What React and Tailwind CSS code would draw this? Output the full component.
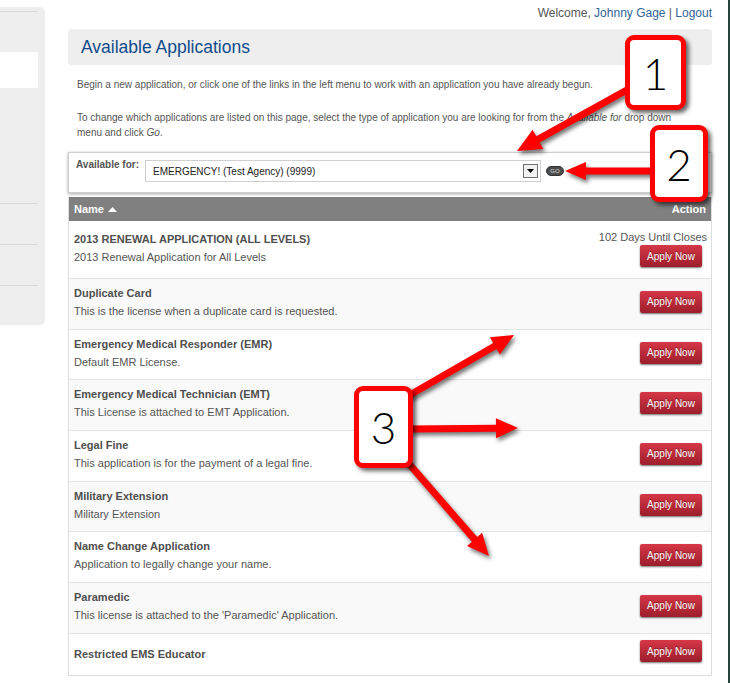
import React from "react";

function arrowPoints(x1, y1, x2, y2, w = 7, L = 22, H = 20) {
  const dx = x2 - x1, dy = y2 - y1;
  const len = Math.hypot(dx, dy);
  const ux = dx / len, uy = dy / len;
  const px = -uy, py = ux;
  const bx = x2 - ux * L, by = y2 - uy * L;
  const pts = [
    [x1 + (px * w) / 2, y1 + (py * w) / 2],
    [bx + (px * w) / 2, by + (py * w) / 2],
    [bx + (px * H) / 2, by + (py * H) / 2],
    [x2, y2],
    [bx - (px * H) / 2, by - (py * H) / 2],
    [bx - (px * w) / 2, by - (py * w) / 2],
    [x1 - (px * w) / 2, y1 - (py * w) / 2],
  ];
  return pts.map((p) => p.map((n) => n.toFixed(1)).join(",")).join(" ");
}

const arrows = [
  [634, 86, 517, 151, 7, 24, 22],
  [656, 171, 565, 171, 7, 21, 18],
  [408, 396, 514, 335, 7, 22, 20],
  [410, 429, 518, 428, 7, 22, 20],
  [404, 458, 489, 556, 7, 22, 20],
];

const rows = [
  {
    t: "2013 RENEWAL APPLICATION (ALL LEVELS)",
    d: "2013 Renewal Application for All Levels",
    days: "102 Days Until Closes",
    cls: "h-[58px] bg-white border-[#e4e4e4] pb-[3px]",
  },
  { t: "Duplicate Card", d: "This is the license when a duplicate card is requested.", cls: "h-[50.7px] bg-[#f9f9f9] border-[#e4e4e4] pb-[4px]" },
  { t: "Emergency Medical Responder (EMR)", d: "Default EMR License.", cls: "h-[50.7px] bg-white border-[#e4e4e4] pb-[4px]" },
  { t: "Emergency Medical Technician (EMT)", d: "This License is attached to EMT Application.", cls: "h-[50.7px] bg-[#f9f9f9] border-[#e4e4e4] pb-[4px]" },
  { t: "Legal Fine", d: "This application is for the payment of a legal fine.", cls: "h-[50.7px] bg-white border-[#e4e4e4] pb-[4px]" },
  { t: "Military Extension", d: "Military Extension", cls: "h-[50.7px] bg-[#f9f9f9] border-[#e4e4e4] pb-[4px]" },
  { t: "Name Change Application", d: "Application to legally change your name.", cls: "h-[50.7px] bg-white border-[#e4e4e4] pb-[4px]" },
  { t: "Paramedic", d: "This license is attached to the 'Paramedic' Application.", cls: "h-[50.7px] bg-[#f9f9f9] border-[#e4e4e4] pb-[4px]" },
  { t: "Restricted EMS Educator", cls: "h-[42px] bg-white border-[#dddddd] pb-0", last: true },
];

function ApplyButton({ up }) {
  return (
    <div className={"h-[22px] w-[62px] rounded-[2px] bg-linear-to-b from-[#d63746] to-[#9d1e2c] text-white text-[10px] flex items-center justify-center shadow-[0_1px_2px_rgba(0,0,0,0.55)] [text-shadow:0_-1px_0_rgba(0,0,0,0.35)] " + (up ? "mb-[6px]" : "")}>
      Apply Now
    </div>
  );
}

function Callout({ n, cls }) {
  return (
    <div
      className={
        "absolute border-[5px] border-[#ff0000] rounded-[9px] bg-white shadow-[3px_3px_4px_rgba(0,0,0,0.6)] flex items-center justify-center text-black text-[44px] leading-none font-light font-['Lato',sans-serif] " +
        cls
      }
    >
      {n}
    </div>
  );
}

export default function App() {
  return (
    <div className="relative w-[730px] h-[683px] overflow-hidden bg-white flex font-['Liberation_Sans',Arial,sans-serif]">
      {/* Sidebar */}
      <div className="w-[45px] shrink-0 mt-[7px] h-[318px] bg-[#eeeeee] rounded-r-[5px] pr-[7px] pt-[4px]">
        <div className="h-px bg-[#d9d9d9]" />
        <div className="h-[40px]" />
        <div className="h-[36px] bg-white" />
        <div className="h-[115px]" />
        <div className="h-px bg-[#d9d9d9]" />
        <div className="h-[40px]" />
        <div className="h-px bg-[#d9d9d9]" />
        <div className="h-[40px]" />
        <div className="h-px bg-[#d9d9d9]" />
      </div>

      {/* Main */}
      <div className="ml-[23px] w-[644px] shrink-0">
        <div className="h-[29px] pt-[5px] text-right text-[12px] leading-[16px] text-[#555555]">
          Welcome, <span className="text-[#2f6497]">Johnny Gage</span> | <span className="text-[#2f6497]">Logout</span>
        </div>
        <div className="h-[36px] bg-[#eeeeee] rounded-[3px] flex items-center pl-[13px]">
          <h1 className="text-[17.5px] text-[#124b8c]">Available Applications</h1>
        </div>
        <p className="mt-[12px] px-[9px] text-[10px] leading-[15px] text-[#555555]">
          Begin a new application, or click one of the links in the left menu to work with an application you have already begun.
        </p>
        <p className="mt-[18px] pl-[9px] pr-[20px] text-[10px] leading-[15px] text-[#555555]">
          To change which applications are listed on this page, select the type of application you are looking for from the <i>Available for</i> drop down menu and click <i>Go</i>.
        </p>

        <div className="mt-[12px] h-[41px] border border-[#cfcfcf] bg-white shadow-[0_1px_3px_rgba(0,0,0,0.35)] flex items-start pt-[7px] pl-[7px]">
          <span className="w-[69px] text-[10px] font-bold leading-[10px] text-[#555555]">Available for:</span>
          <div className="w-[396px] h-[22px] border border-[#d0d0d0] bg-white flex items-center justify-between pl-[7px] pr-[2px]">
            <span className="text-[10px] text-[#222222]">EMERGENCY! (Test Agency) (9999)</span>
            <div className="w-[15px] h-[14px] border border-[#6f6f6f] bg-[#f2f2f2] flex items-center justify-center">
              <svg width="7" height="4" viewBox="0 0 7 4">
                <polygon points="0,0 7,0 3.5,4" fill="#000" />
              </svg>
            </div>
          </div>
          <div className="ml-[5px] mt-[6px] w-[18px] h-[10px] rounded-full bg-[#4d4d4d] border border-[#333333] flex items-center justify-center text-[6px] leading-none text-[#dddddd]">
            GO
          </div>
        </div>

        <div className="mt-[4px] border-x border-[#dddddd]">
          <div className="h-[24px] bg-[#808080] flex items-center justify-between pl-[5px] pr-[5px] text-white text-[11px] font-bold">
            <span className="flex items-center gap-[4px]">
              Name
              <svg width="9" height="5" viewBox="0 0 9 5">
                <polygon points="0,5 9,5 4.5,0" fill="#fff" />
              </svg>
            </span>
            <span>Action</span>
          </div>
          {rows.map((r, i) => (
            <div key={i} className={"flex items-center justify-between pl-[5px] pr-[9px] border-b " + r.cls}>
              <div>
                <div className="text-[11px] leading-[18px] font-bold text-[#4f4f4f]">{r.t}</div>
                {r.d && <div className="text-[11px] leading-[18px] text-[#555555]">{r.d}</div>}
              </div>
              <div className="flex flex-col items-end">
                {r.days && <div className="text-[11px] leading-[16px] text-[#555555] mr-[-5px]">{r.days}</div>}
                <ApplyButton up={r.last} />
              </div>
            </div>
          ))}
        </div>
      </div>

      {/* right window edge */}
      <div className="ml-auto w-[2px] bg-[#26443c]" />

      {/* Annotation arrows */}
      <svg
        className="absolute left-0 top-0 pointer-events-none [filter:drop-shadow(2px_3px_2px_rgba(0,0,0,0.55))]"
        width="730"
        height="683"
        viewBox="0 0 730 683"
      >
        {arrows.map((a, i) => (
          <polygon key={i} points={arrowPoints(...a)} fill="#ff0000" />
        ))}
      </svg>

      <Callout n="1" cls="left-[625px] top-[35px] w-[61px] h-[75px]" />
      <Callout n="2" cls="left-[650px] top-[125px] w-[58px] h-[77px]" />
      <Callout n="3" cls="left-[354px] top-[386px] w-[59px] h-[82px]" />
    </div>
  );
}
